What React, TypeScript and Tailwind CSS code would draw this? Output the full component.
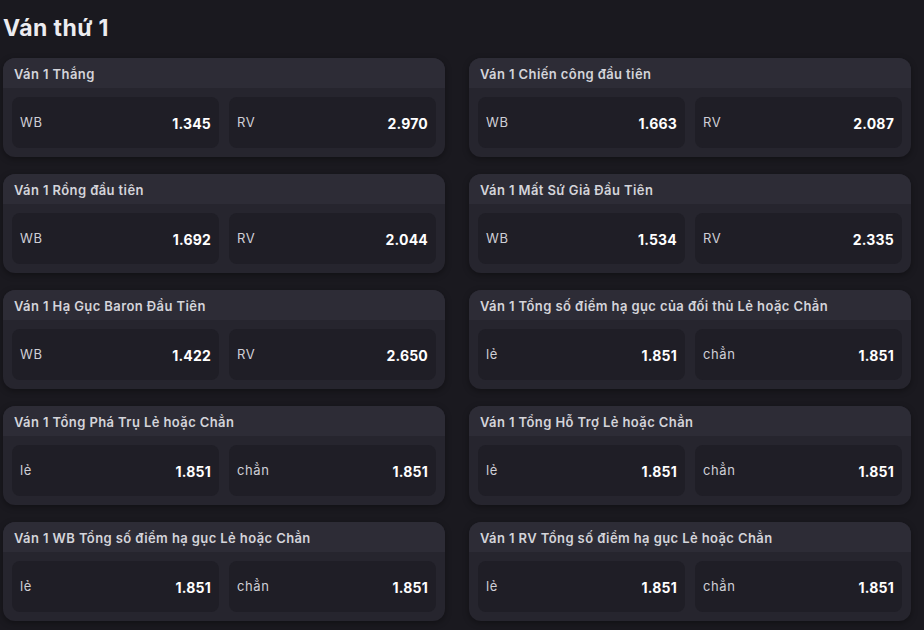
import React from "react";

type Market = { title: string; a: [string, string]; b: [string, string] };

const left: Market[] = [
  { title: "Ván 1 Thắng", a: ["WB", "1.345"], b: ["RV", "2.970"] },
  { title: "Ván 1 Rồng đầu tiên", a: ["WB", "1.692"], b: ["RV", "2.044"] },
  { title: "Ván 1 Hạ Gục Baron Đầu Tiên", a: ["WB", "1.422"], b: ["RV", "2.650"] },
  { title: "Ván 1 Tổng Phá Trụ Lẻ hoặc Chẳn", a: ["lẻ", "1.851"], b: ["chẳn", "1.851"] },
  { title: "Ván 1 WB Tổng số điểm hạ gục Lẻ hoặc Chẳn", a: ["lẻ", "1.851"], b: ["chẳn", "1.851"] },
];

const right: Market[] = [
  { title: "Ván 1 Chiến công đầu tiên", a: ["WB", "1.663"], b: ["RV", "2.087"] },
  { title: "Ván 1 Mất Sứ Giả Đầu Tiên", a: ["WB", "1.534"], b: ["RV", "2.335"] },
  { title: "Ván 1 Tổng số điểm hạ gục của đối thủ Lẻ hoặc Chẳn", a: ["lẻ", "1.851"], b: ["chẳn", "1.851"] },
  { title: "Ván 1 Tổng Hỗ Trợ Lẻ hoặc Chẳn", a: ["lẻ", "1.851"], b: ["chẳn", "1.851"] },
  { title: "Ván 1 RV Tổng số điểm hạ gục Lẻ hoặc Chẳn", a: ["lẻ", "1.851"], b: ["chẳn", "1.851"] },
];

function Odd({ label, value }: { label: string; value: string }) {
  return (
    <div className="flex h-[51px] flex-1 items-center justify-between rounded-[8px] bg-[#1f1e26] px-[8px] pt-[1px]">
      <span className="text-[13px] tracking-[0.6px] text-[#cfcfd6]">{label}</span>
      <span className="text-[14px] font-bold tracking-[0.2px] text-white">{value}</span>
    </div>
  );
}

function Card({ m }: { m: Market }) {
  return (
    <div className="overflow-hidden rounded-[12px] bg-[#26252e] shadow-[0_2px_6px_rgba(0,0,0,0.35)]">
      <div className="flex h-[30px] items-center bg-[#2d2c36] px-[11px] pt-[3px] text-[13px] font-semibold tracking-[0.4px] text-[#d4d4da]">
        {m.title}
      </div>
      <div className="flex gap-[10px] p-[9px]">
        <Odd label={m.a[0]} value={m.a[1]} />
        <Odd label={m.b[0]} value={m.b[1]} />
      </div>
    </div>
  );
}

export default function App() {
  return (
    <div className="min-h-[630px] w-[924px] bg-[#1a191f] font-['Inter',sans-serif]">
      <div className="w-[911px] pl-[3px]">
        <h1 className="flex h-[58px] items-center pb-[2px] text-[23px] font-bold tracking-[0.4px] text-[#ececf0]">
          Ván thứ 1
        </h1>
        <div className="flex gap-[24px]">
          <div className="flex flex-1 flex-col gap-[17px]">
            {left.map((m, i) => (
              <Card key={i} m={m} />
            ))}
          </div>
          <div className="flex flex-1 flex-col gap-[17px]">
            {right.map((m, i) => (
              <Card key={i} m={m} />
            ))}
          </div>
        </div>
      </div>
    </div>
  );
}
